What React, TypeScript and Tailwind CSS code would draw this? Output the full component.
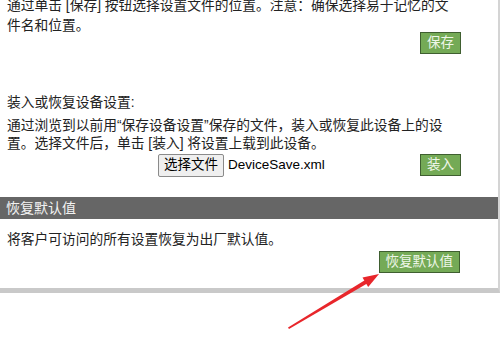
import React from "react";

const font = { fontFamily: '"Liberation Sans", "Noto Sans CJK SC", sans-serif' };

function GreenButton({ children }: { children: React.ReactNode }) {
  return (
    <div className="h-[22px] px-[6px] flex items-center bg-[#74aa56] border border-[#3f5f30] text-[#eef6e8] text-[13.5px] leading-none">
      {children}
    </div>
  );
}

export default function App() {
  return (
    <div className="relative w-[500px] h-[362px] bg-white overflow-hidden text-[#222]" style={font}>
      <div className="w-[500px] h-[293px] border-r-2 border-r-[#d4d4d4] border-b-[5px] border-b-[#c9c9c9] overflow-hidden">
        <div className="pl-[7px] pr-[37px] text-[13.75px]">
          <p className="mt-[-4px] leading-[20px]">
            通过单击 [保存] 按钮选择设置文件的位置。注意：确保选择易于记忆的文
            <br />
            件名和位置。
          </p>
          <div className="flex justify-end mt-[-4px]">
            <GreenButton>保存</GreenButton>
          </div>
          <p className="mt-[39px] leading-[20px]">装入或恢复设备设置:</p>
          <p className="leading-[18px] mt-[4px]">
            通过浏览到以前用“保存设备设置”保存的文件，装入或恢复此设备上的设
            <br />
            置。选择文件后，单击 [装入] 将设置上载到此设备。
          </p>
          <div className="flex items-start mt-[1px]">
            <div className="ml-[151px] flex items-center">
              <div className="h-[23px] w-[66px] flex items-center justify-center bg-[#efefef] border border-[#8a8a8a] rounded-[2px] text-[13.5px] text-black">
                选择文件
              </div>
              <span className="ml-[4px] text-[13.5px] text-black">DeviceSave.xml</span>
            </div>
            <div className="ml-auto">
              <GreenButton>装入</GreenButton>
            </div>
          </div>
        </div>
        <div className="mt-[20px] h-[22px] bg-[#666666] flex items-center pl-[6px] text-[14px] text-[#f2f2f2]">
          恢复默认值
        </div>
        <div className="pl-[7px] pr-[38px] text-[13.75px]">
          <p className="mt-[11px] leading-[20px]">将客户可访问的所有设置恢复为出厂默认值。</p>
          <div className="flex justify-end mt-[1px]">
            <GreenButton>恢复默认值</GreenButton>
          </div>
        </div>
      </div>
      <svg className="absolute left-0 top-0 pointer-events-none" width="500" height="362" viewBox="0 0 500 362">
        <polygon points="289,329 288,327.5 366,279.5 368,283" fill="#e8262b" />
        <polygon points="379,274 368.2,287 362.5,277.6" fill="#e8262b" />
      </svg>
    </div>
  );
}
